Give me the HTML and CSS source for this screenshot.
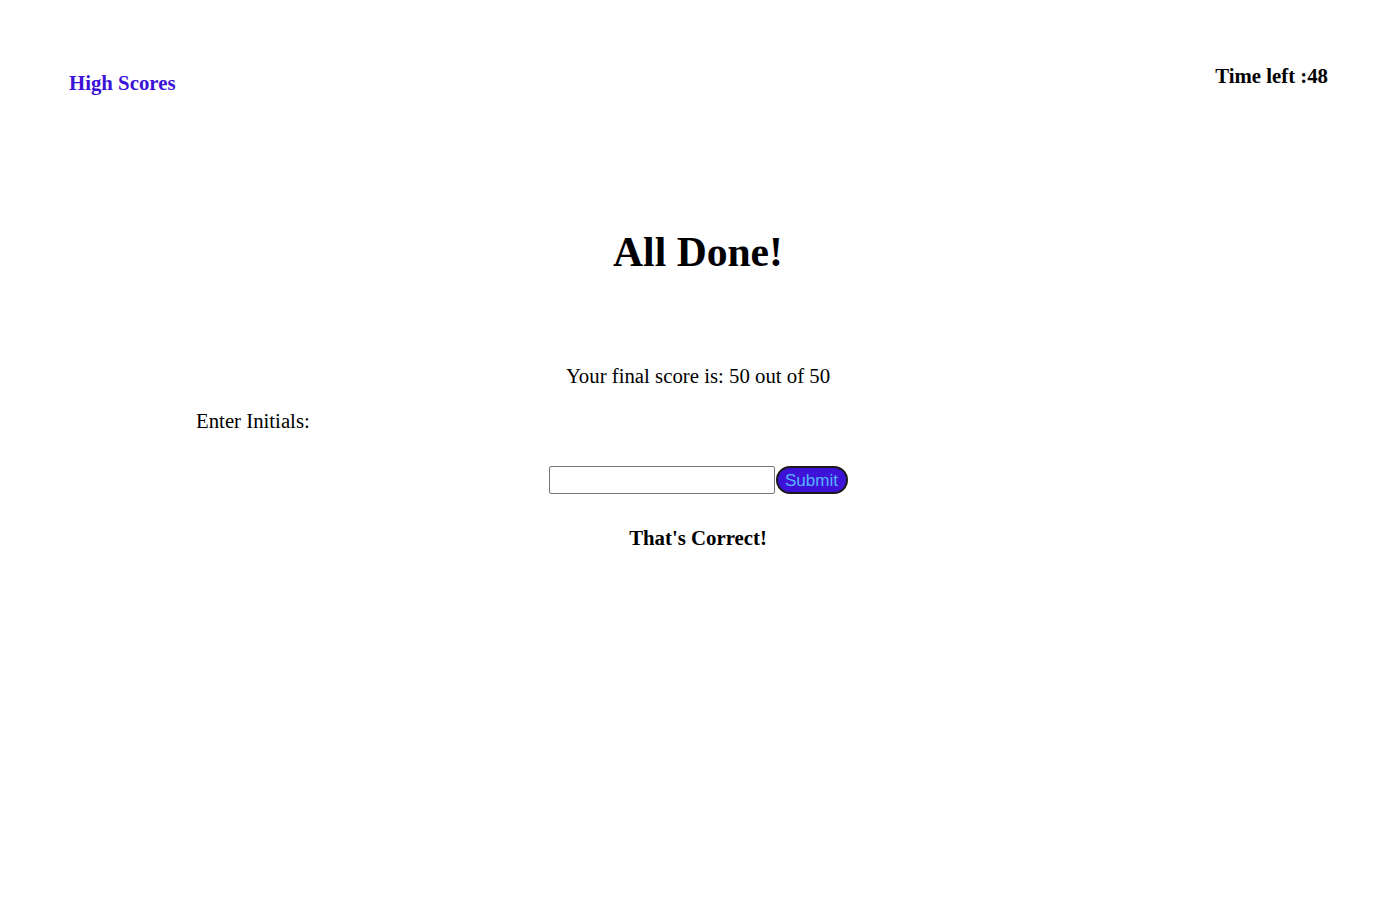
FILE: index.html
```html
<!DOCTYPE html>
<html>
<head>
<meta charset="utf-8">
<link rel="stylesheet" href="styles.css">
</head>
<body>
<header class="top">
  <a class="high-scores" href="#">High Scores</a>
  <div class="timer">Time left :48</div>
</header>
<main class="done">
  <h1 class="title">All Done!</h1>
  <p class="score">Your final score is: 50 out of 50</p>
  <p class="label">Enter Initials:</p>
  <form class="entry">
    <input class="initials" type="text">
    <button class="submit" type="button">Submit</button>
  </form>
  <p class="feedback">That's Correct!</p>
</main>
</body>
</html>
```

FILE: styles.css
```css
html, body {
  margin: 0;
  padding: 0;
  background: #ffffff;
}
body {
  font-family: "Liberation Serif", "Times New Roman", serif;
  font-size: 20.8px;
  color: #000;
}
.top {
  display: flex;
  justify-content: space-between;
  align-items: flex-start;
  padding: 0 68px 0 69px;
}
.high-scores {
  margin-top: 71px;
  font-weight: bold;
  color: #3b12d6;
  text-decoration: none;
  line-height: 24px;
}
.timer {
  margin-top: 64px;
  font-weight: bold;
  line-height: 24px;
}
.done {
  display: flex;
  flex-direction: column;
  align-items: center;
}
.title {
  margin: 133px 0 0;
  font-size: 41.6px;
  line-height: 48px;
  font-weight: bold;
}
.score {
  margin: 88px 0 0;
  line-height: 24px;
}
.label {
  align-self: flex-start;
  margin: 21px 0 0 196px;
  line-height: 24px;
}
.entry {
  display: flex;
  align-items: center;
  margin: 33px 0 0;
  height: 28px;
}
.initials {
  box-sizing: border-box;
  width: 226px;
  height: 28px;
  margin: 0 1px 0 0;
  border: 1px solid #767676;
  border-radius: 2px;
  padding: 2px 4px;
  font-size: 16px;
}
.submit {
  box-sizing: border-box;
  width: 72px;
  height: 28px;
  padding: 1px 0 0;
  background: #3f12d8;
  color: #55b4ff;
  border: 2px solid #1a1a1a;
  border-radius: 14px;
  font-family: "Liberation Sans", Arial, sans-serif;
  font-size: 17px;
}
.feedback {
  margin: 32px 0 0;
  font-weight: bold;
  line-height: 24px;
}
```
